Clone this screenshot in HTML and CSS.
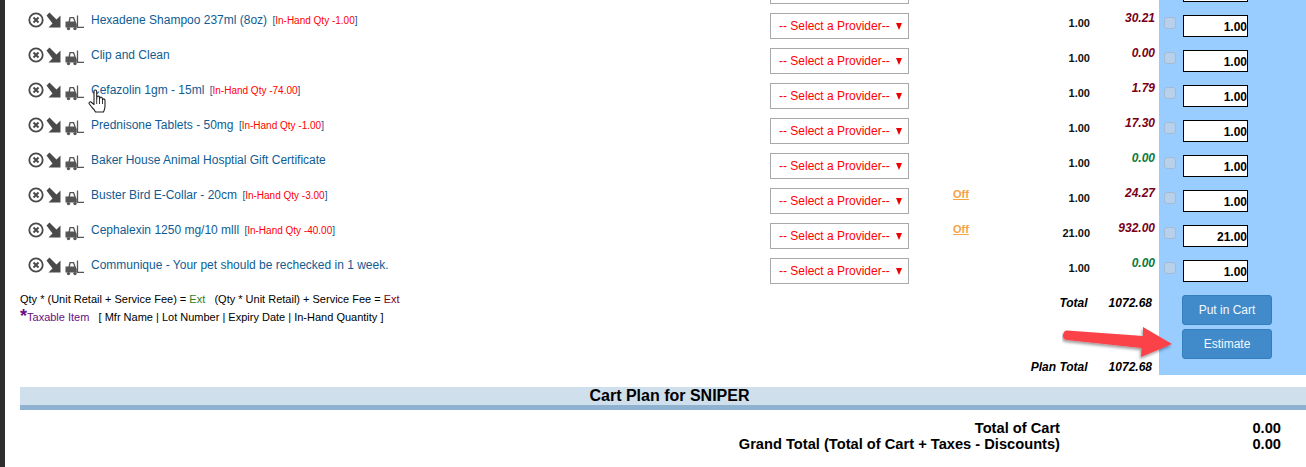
FILE: index.html
```html
<!DOCTYPE html>
<html lang="en">
<head>
<meta charset="utf-8">
<title>Cart Plan</title>
<link rel="stylesheet" href="styles.css">
</head>
<body>
<svg class="defs" width="0" height="0" aria-hidden="true">
  <symbol id="i-x" viewBox="0 0 16 16"><circle cx="8" cy="8" r="6.700" fill="none" stroke="#4a4a4a" stroke-width="1.800"/><path d="M5.500 5.500l5 5M10.500 5.500l-5 5" stroke="#4a4a4a" stroke-width="2"/></symbol>
  <symbol id="i-arrow" viewBox="0 0 16 16"><path d="M0.500 3.500L3.500 0.500 10.500 7.500 14.500 3.500V15.500H2.500L6.500 11.500Z" fill="#4a4a4a"/></symbol>
  <symbol id="i-fork" viewBox="0 0 19 16"><path fill-rule="evenodd" d="M0.500 6.500H3.500L4.500 2H9L11 7.500 11.800 9V12.500H0.500ZM5 6.500H9.300L8 3.300H5.600Z" fill="#555"/><path d="M12.500 0.500V12.300H19" fill="none" stroke="#555" stroke-width="1.300"/><circle cx="3.500" cy="13.600" r="1.700" fill="#555"/><circle cx="10" cy="13.600" r="1.700" fill="#555"/></symbol>
</svg>
<div class="shell">
  <main class="main">
    <div class="row row-clip">
      <span></span><span></span>
      <div class="select"></div>
      <span></span><span></span><span></span>
      <div class="side"><i class="check"></i><div class="input"></div></div>
    </div>

    <div class="row">
      <div class="icons"><svg class="ic"><use href="#i-x"/></svg><svg class="ic"><use href="#i-arrow"/></svg><svg class="fk"><use href="#i-fork"/></svg></div>
      <div class="name">Hexadene Shampoo 237ml (8oz) <span class="hand">[<b>In-Hand Qty -1.00</b>]</span></div>
      <div class="select"><span>-- Select a Provider--</span><i class="caret"></i></div>
      <span></span><div class="qty">1.00</div><div class="price red">30.21</div>
      <div class="side"><i class="check"></i><div class="input">1.00</div></div>
    </div>
    <div class="row">
      <div class="icons"><svg class="ic"><use href="#i-x"/></svg><svg class="ic"><use href="#i-arrow"/></svg><svg class="fk"><use href="#i-fork"/></svg></div>
      <div class="name">Clip and Clean</div>
      <div class="select"><span>-- Select a Provider--</span><i class="caret"></i></div>
      <span></span><div class="qty">1.00</div><div class="price red">0.00</div>
      <div class="side"><i class="check"></i><div class="input">1.00</div></div>
    </div>
    <div class="row">
      <div class="icons"><svg class="ic"><use href="#i-x"/></svg><svg class="ic"><use href="#i-arrow"/></svg><svg class="fk"><use href="#i-fork"/></svg></div>
      <div class="name">Cefazolin 1gm - 15ml <span class="hand">[<b>In-Hand Qty -74.00</b>]</span></div>
      <div class="select"><span>-- Select a Provider--</span><i class="caret"></i></div>
      <span></span><div class="qty">1.00</div><div class="price red">1.79</div>
      <div class="side"><i class="check"></i><div class="input">1.00</div></div>
    </div>
    <div class="row">
      <div class="icons"><svg class="ic"><use href="#i-x"/></svg><svg class="ic"><use href="#i-arrow"/></svg><svg class="fk"><use href="#i-fork"/></svg></div>
      <div class="name">Prednisone Tablets - 50mg <span class="hand">[<b>In-Hand Qty -1.00</b>]</span></div>
      <div class="select"><span>-- Select a Provider--</span><i class="caret"></i></div>
      <span></span><div class="qty">1.00</div><div class="price red">17.30</div>
      <div class="side"><i class="check"></i><div class="input">1.00</div></div>
    </div>
    <div class="row">
      <div class="icons"><svg class="ic"><use href="#i-x"/></svg><svg class="ic"><use href="#i-arrow"/></svg><svg class="fk"><use href="#i-fork"/></svg></div>
      <div class="name">Baker House Animal Hosptial Gift Certificate</div>
      <div class="select"><span>-- Select a Provider--</span><i class="caret"></i></div>
      <span></span><div class="qty">1.00</div><div class="price green">0.00</div>
      <div class="side"><i class="check"></i><div class="input">1.00</div></div>
    </div>
    <div class="row">
      <div class="icons"><svg class="ic"><use href="#i-x"/></svg><svg class="ic"><use href="#i-arrow"/></svg><svg class="fk"><use href="#i-fork"/></svg></div>
      <div class="name">Buster Bird E-Collar - 20cm <span class="hand">[<b>In-Hand Qty -3.00</b>]</span></div>
      <div class="select"><span>-- Select a Provider--</span><i class="caret"></i></div>
      <a class="off">Off</a><div class="qty">1.00</div><div class="price red">24.27</div>
      <div class="side"><i class="check"></i><div class="input">1.00</div></div>
    </div>
    <div class="row">
      <div class="icons"><svg class="ic"><use href="#i-x"/></svg><svg class="ic"><use href="#i-arrow"/></svg><svg class="fk"><use href="#i-fork"/></svg></div>
      <div class="name">Cephalexin 1250 mg/10 mlll <span class="hand">[<b>In-Hand Qty -40.00</b>]</span></div>
      <div class="select"><span>-- Select a Provider--</span><i class="caret"></i></div>
      <a class="off">Off</a><div class="qty">21.00</div><div class="price red">932.00</div>
      <div class="side"><i class="check"></i><div class="input">21.00</div></div>
    </div>
    <div class="row">
      <div class="icons"><svg class="ic"><use href="#i-x"/></svg><svg class="ic"><use href="#i-arrow"/></svg><svg class="fk"><use href="#i-fork"/></svg></div>
      <div class="name">Communique - Your pet should be rechecked in 1 week.</div>
      <div class="select"><span>-- Select a Provider--</span><i class="caret"></i></div>
      <span></span><div class="qty">1.00</div><div class="price green">0.00</div>
      <div class="side"><i class="check"></i><div class="input">1.00</div></div>
    </div>

    <div class="foot">
      <div class="legend">
        <p class="l1">Qty * (Unit Retail + Service Fee) = <span class="g">Ext</span> &nbsp; (Qty * Unit Retail) + Service Fee = <span class="m">Ext</span></p>
        <p class="l2"><span class="tax"><b>*</b>Taxable Item</span> &nbsp; [ Mfr Name | Lot Number | Expiry Date | In-Hand Quantity ]</p>
      </div>
      <div class="sums">
        <div class="sum"><em>Total</em><em>1072.68</em></div>
        <div class="sum"><em>Plan Total</em><em>1072.68</em></div>
      </div>
      <div class="actions">
        <button class="btn" type="button">Put in Cart</button>
        <button class="btn" type="button">Estimate</button>
      </div>
    </div>

    <section class="plan-sec">
      <h2 class="plan-head">Cart Plan for SNIPER</h2>
      <div class="totals">
        <span>Total of Cart</span><span class="val">0.00</span>
        <span>Grand Total (Total of Cart + Taxes - Discounts)</span><span class="val">0.00</span>
      </div>
    </section>
  </main>
</div>

<svg class="red-arrow" width="122" height="40" viewBox="0 0 122 40" aria-hidden="true">
  <defs><filter id="sh" x="-10%" y="-30%" width="120%" height="170%"><feDropShadow dx="-1" dy="2" stdDeviation="1.500" flood-color="#000" flood-opacity=".4"/></filter></defs>
  <path d="M5 4.500L81 10 81 1 110 18 79 31 79.500 22 5 14Q1 13.500 1 9.500 1.500 4.500 5 4.500Z" fill="#fb4249" filter="url(#sh)"/>
</svg>
<svg class="cursor" width="20" height="26" viewBox="0 0 20 26" aria-hidden="true">
  <path d="M6 2.500Q6 1 7.300 1T8.700 2.500V10L9 7.500Q10.500 6.500 11.500 8V10L12 8.500Q13.500 7.500 14.500 9.500V11L15 10Q16.500 9.500 17 11V17Q17 20 15.500 23H7.500Q6.500 20.500 4 18.500L1 14.500Q1 12.500 3 13L6 15.500Z" fill="#fff" stroke="#222" stroke-width="1.100" stroke-linejoin="round"/>
  <path d="M8.700 10v5M11.500 10v5M14.500 11v4" stroke="#222" stroke-width=".9"/>
</svg>
</body>
</html>
```
FILE: styles.css
```css
* { box-sizing: border-box; }
html, body { margin: 0; height: 467px; overflow: hidden; background: #fff; }
body { font-family: "Liberation Sans", Arial, sans-serif; font-size: 12px; color: #000; position: relative; }
.defs { position: absolute; }
.shell { border-left: 5px solid #2e2e2e; height: 467px; overflow: hidden; }
.main { margin-top: -27px; }

.row {
  display: grid;
  grid-template-columns: 71px 679px 139px 131px 50px 69px 147px;
  height: 35px;
  padding-left: 15px;
}
.icons { display: flex; align-items: flex-start; padding: 4px 0 0 8px; }
.ic { width: 16px; height: 16px; margin-right: 2px; }
.fk { width: 19px; height: 16px; margin: 3px 0 0 1px; }
.name { color: #0f5c93; font-size: 12px; line-height: 14px; padding-top: 5px; white-space: nowrap; }
.hand { font-size: 10px; margin-left: 2px; }
.hand b { color: #f00; font-weight: 400; font-size: 10px; }
.select {
  height: 26px; width: 139px; margin-top: 5px;
  border: 1px solid #a9a9a9; background: #fff; color: #f00;
  font-size: 12px; display: flex; align-items: center; justify-content: space-between;
  padding: 0 6px 0 8px;
}
.caret { width: 0; height: 0; border-left: 3.500px solid transparent; border-right: 3.500px solid transparent; border-top: 7px solid #e00; }
.off { color: #f3a447; font-size: 11px; font-weight: 700; text-decoration: underline; padding: 4px 0 0 44px; line-height: 14px; }
.qty { text-align: right; font-size: 11px; font-weight: 700; line-height: 14px; padding-top: 8px; color: #111; }
.price { text-align: right; font-size: 12px; font-weight: 700; font-style: italic; line-height: 14px; padding: 3px 4px 0 0; }
.red { color: #7a0019; }
.green { color: #0a7a3c; }
.side { background: #99ccff; display: flex; align-items: flex-start; padding-left: 5px; }
.check { width: 12px; height: 12px; margin-top: 9px; background: #b9d0ea; border: 1px solid #a3bbd5; border-radius: 3px; }
.input {
  width: 65px; height: 22px; margin: 7px 0 0 7px;
  border: 1px solid #000; background: #fff;
  text-align: right; font-size: 12px; font-weight: 700; line-height: 22px;
}

.foot {
  display: grid;
  grid-template-columns: 1000px 139px 147px;
  height: 87px;
  padding-left: 15px;
}
.legend p { margin: 0; font-size: 11px; white-space: nowrap; }
.l1 { padding-top: 4px; line-height: 14px; }
.l2 { padding-top: 3px; line-height: 16px; }
.g { color: #2e7d1e; }
.m { color: #7a0019; }
.tax { color: #6a0d83; }
.tax b { font-size: 18px; font-weight: 700; line-height: 10px; vertical-align: -1px; }
.sums { display: flex; flex-direction: column; justify-content: space-between; padding: 8px 7px 1px 0; }
.sum { display: flex; justify-content: flex-end; gap: 21px; font-size: 12px; font-weight: 700; font-style: italic; line-height: 14px; margin-left: -60px; }
.actions { background: #99ccff; display: flex; flex-direction: column; gap: 4px; padding: 7px 0 0 23px; }
.btn {
  width: 90px; height: 30px; padding: 0;
  background: #428bca; color: #f2f8ff; border: 1px solid #357ebd; border-radius: 3px;
  font: 12px "Liberation Sans", Arial, sans-serif;
}

.plan-sec { margin: 12px 0 0 15px; }
.plan-head {
  margin: 0; height: 23px; background: #d0dfec; border-bottom: 5px solid #8fb2d1;
  font-size: 16px; font-weight: 700; text-align: center; line-height: 18px; padding-left: 13px;
}
.totals {
  display: grid; grid-template-columns: 1040px 221px;
  font-size: 14.670px; font-weight: 700; line-height: 16px; padding-top: 10px; text-align: right;
}
.val { text-align: right; }

.red-arrow { position: absolute; left: 1062px; top: 326px; }
.cursor { position: absolute; left: 88px; top: 89px; }
```
